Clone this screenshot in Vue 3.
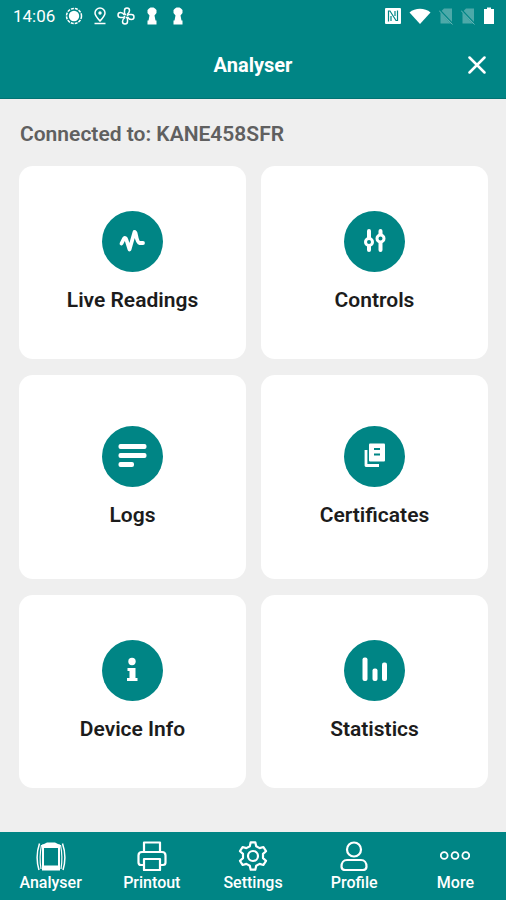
<template>
  <div class="app">
    <header class="top">
      <div class="status-bar">
        <span class="time">14:06</span>
        <div class="status-left">
          <svg width="18" height="18" viewBox="0 0 18 18">
            <circle cx="9" cy="9" r="5.200" fill="#fff" />
            <circle cx="9" cy="9" r="7.500" class="thin" stroke-dasharray="3 1" />
          </svg>
          <svg width="18" height="18" viewBox="0 0 18 18">
            <path d="M9 14 C6 10.800 4 8.700 4 6 A5 5 0 0 1 14 6 C14 8.700 12 10.800 9 14 Z" class="thin" />
            <circle cx="9" cy="6" r="1.700" fill="#fff" />
            <path d="M3.500 16.500 H14.500" class="thin" />
          </svg>
          <svg width="18" height="18" viewBox="0 0 18 18">
            <path v-for="angle in [0, 90, 180, 270]" :key="angle" d="M9 8 L7.500 6.500 V3.500 C7.500 0.200 12.500 0.200 12.500 3.500 C12.500 5.500 11.500 6.500 10 7.500" class="thin" :transform="`rotate(${angle} 9 9)`" />
          </svg>
          <svg v-for="n in 2" :key="n" width="18" height="18" viewBox="0 0 18 18">
            <path d="M6 1.500 L7.500 0.500 H10.500 L12 1.500 L13.500 3 V6 L11.500 8.500 L12.500 13.500 H13.500 V17.500 H4.500 V13.500 H5.500 L6.500 8.500 L4.500 6 V3 Z" fill="#fff" />
          </svg>
        </div>
        <div class="status-right">
          <svg width="16" height="18" viewBox="0 0 16 18">
            <rect y="1" width="16" height="16" rx="1" fill="#fff" />
            <path d="M3.500 14.500 V4 H5 L11 13.500 H12.500 V3.500 M6 14 V9 M10 4 V9" fill="none" stroke="#008585" stroke-width="1.200" />
          </svg>
          <svg width="22" height="18" viewBox="0 0 22 18">
            <path d="M11 17 L0.500 5.500 C6 0.500 16 0.500 21.500 5.500 Z" fill="#fff" />
          </svg>
          <svg v-for="n in 2" :key="n" width="14" height="18" viewBox="0 0 14 18">
            <path d="M5 1.500 H13 V16.500 H1.500 V5 Z" fill="#4da9a9" />
            <path d="M0 2.500 L14 17.500" stroke="#008585" stroke-width="2" />
            <path d="M0 3.500 L13.500 17.500" stroke="#6ab8b8" stroke-width="1" />
          </svg>
          <svg width="12" height="18" viewBox="0 0 12 18">
            <path d="M4 0.500 H8 V2 H11 V17 H1 V2 H4 Z" fill="#fff" />
          </svg>
        </div>
      </div>
      <div class="title-bar">
        <h1>Analyser</h1>
        <button class="close" type="button" aria-label="Close">
          <svg width="18" height="18" viewBox="0 0 18 18">
            <path d="M1.500 1.500 L16.500 16.500 M16.500 1.500 L1.500 16.500" fill="none" stroke="#fff" stroke-width="2.500" stroke-linecap="round" />
          </svg>
        </button>
      </div>
    </header>

    <main>
      <h2>Connected to: {{ device }}</h2>
      <div class="cards">
        <button v-for="card in cards" :key="card.name" class="card" type="button">
          <svg class="card-icon" viewBox="0 0 61 61" aria-hidden="true">
            <circle cx="30.500" cy="30.500" r="30.500" fill="#008585" />
            <path v-if="card.icon === 'live'" d="M19.500 32.500 L22 27.500 Q23.500 26 24.500 29 L27.500 38.500 L32.500 21 Q33.500 21 34 24 Q35.500 32 37.500 32 H41" fill="none" stroke="#fff" stroke-width="3.800" stroke-linecap="round" stroke-linejoin="round" />
            <g v-else-if="card.icon === 'controls'" fill="#008585" stroke="#fff" stroke-width="3" stroke-linecap="round">
              <path d="M25 20 V39 M36.500 20 V39" stroke-width="4" />
              <circle cx="25" cy="31" r="3.500" />
              <circle cx="36.500" cy="27.500" r="3.500" />
            </g>
            <g v-else-if="card.icon === 'logs'" fill="#fff">
              <rect x="16.500" y="18" width="28" height="5" rx="2" />
              <rect x="16.500" y="27" width="28" height="5" rx="2" />
              <rect x="16.500" y="36" width="15.500" height="5" rx="2" />
            </g>
            <g v-else-if="card.icon === 'certificates'" fill="none" stroke="#fff">
              <rect x="25" y="17.500" width="16" height="18" rx="1" fill="#fff" stroke="none" />
              <path d="M30 23 H36 M30 28.500 H36" stroke="#008585" stroke-width="2" />
              <path d="M22 24 V39.500 H35" stroke-width="2.800" stroke-linejoin="round" />
            </g>
            <g v-else-if="card.icon === 'info'" fill="#fff">
              <circle cx="30" cy="21.500" r="3.700" />
              <path d="M25.500 28 H33.500 V38 H35.500 V41 H25 V38 H27.500 V31 H25.500 Z" />
            </g>
            <g v-else fill="#fff">
              <rect x="18.500" y="17.500" width="5" height="23.500" rx="2" />
              <rect x="28.500" y="28.500" width="5" height="12.500" rx="2" />
              <rect x="38" y="22.500" width="5" height="18.500" rx="2" />
            </g>
          </svg>
          <span>{{ card.name }}</span>
        </button>
      </div>
    </main>

    <nav>
      <a v-for="tab in tabs" :key="tab" href="#">
        <svg width="30" height="30" viewBox="0 0 30 30" aria-hidden="true">
          <g v-if="tab === 'Analyser'" fill="none" stroke="#fff">
            <path d="M7 4.500 H23 V28 H7 Z" stroke-width="2" />
            <path d="M11 1.500 H19 L24 4 V7 H6 V4 Z M6 24.500 H24 V29.500 H6 Z" fill="#fff" stroke="none" />
            <path d="M3.500 2.500 Q-1 15.500 3 29 M26.500 2.500 Q31 15.500 27 29" stroke-width="1.500" />
            <path d="M5.500 4 Q3 16 5 28 M24.500 4 Q27 16 25 28" stroke-width="1.200" />
          </g>
          <g v-else-if="tab === 'Printout'" class="line">
            <path d="M7 10 V1.500 H23 V10" />
            <path d="M7 24 H4 Q1.500 24 1.500 21.500 V14.500 Q1.500 11 5 11 H25 Q28.500 11 28.500 14.500 V21.500 Q28.500 24 26 24 H23" />
            <path d="M7 18 H23 V29 H7 Z" />
          </g>
          <g v-else-if="tab === 'Settings'" class="line">
            <path d="M12.700 1.300 H17.300 L18.200 5.200 L21.600 7.100 L25.400 6 L28 10.200 L25 12.900 V17.100 L28 19.800 L25.400 24 L21.600 22.900 L18.200 24.800 L17.300 28.700 H12.700 L11.800 24.800 L8.400 22.900 L4.600 24 L2 19.800 L5 17.100 V12.900 L2 10.200 L4.600 6 L8.400 7.100 L11.800 5.200 Z" />
            <circle cx="15" cy="15" r="5" />
          </g>
          <g v-else-if="tab === 'Profile'" class="line">
            <circle cx="15" cy="8.500" r="7" />
            <path d="M8 19 H22 C25.500 19 27.500 22 27.500 25.500 Q27.500 29 24 29 H6 Q2.500 29 2.500 25.500 C2.500 22 4.500 19 8 19 Z" />
          </g>
          <g v-else fill="none" stroke="#fff" stroke-width="1.800">
            <circle cx="4.200" cy="14.500" r="3.400" />
            <circle cx="15" cy="14.500" r="3.400" />
            <circle cx="25.800" cy="14.500" r="3.400" />
          </g>
        </svg>
        <span>{{ tab }}</span>
      </a>
    </nav>
  </div>
</template>

<script setup>
import { ref } from 'vue'

const device = ref('KANE458SFR')

const cards = [
  { name: 'Live Readings', icon: 'live' },
  { name: 'Controls', icon: 'controls' },
  { name: 'Logs', icon: 'logs' },
  { name: 'Certificates', icon: 'certificates' },
  { name: 'Device Info', icon: 'info' },
  { name: 'Statistics', icon: 'statistics' },
]

const tabs = ['Analyser', 'Printout', 'Settings', 'Profile', 'More']
</script>

<style>
body {
  margin: 0;
  background: #efefef;
}
</style>

<style scoped>
.app {
  display: flex;
  flex-direction: column;
  min-height: 100vh;
  background: #efefef;
  font-family: Roboto, "Liberation Sans", sans-serif;
}

svg {
  display: block;
}

button {
  border: none;
  padding: 0;
  font-family: inherit;
  cursor: pointer;
}

.top {
  background: #008585;
  color: #fff;
  border-bottom: 1px solid #007373;
}

.status-bar {
  display: flex;
  align-items: center;
  height: 31px;
  padding: 0 11px 0 13px;
}

.time {
  font-size: 17px;
  line-height: 24px;
}

.status-left {
  display: flex;
  gap: 8px;
  margin-left: 10px;
}

.status-right {
  display: flex;
  gap: 8px;
  margin-left: auto;
}

.thin {
  fill: none;
  stroke: #fff;
  stroke-width: 1.5;
}

.title-bar {
  display: grid;
  grid-template-columns: 1fr auto 1fr;
  align-items: center;
  height: 67px;
  padding: 0 16px;
}

h1 {
  grid-column: 2;
  margin: 0;
  font-size: 20px;
  line-height: 24px;
  font-weight: 700;
}

.close {
  justify-self: end;
  padding: 4px;
  background: none;
}

main {
  flex: 1;
  display: flex;
  flex-direction: column;
  padding: 23px 18px 44px 19px;
}

h2 {
  margin: 0 0 20px 1px;
  color: #606060;
  font-size: 21px;
  line-height: 24px;
  font-weight: 600;
}

.cards {
  flex: 1;
  display: grid;
  grid-template-columns: 1fr 1fr;
  grid-template-rows: 193fr 204fr 193fr;
  gap: 16px 15px;
}

.card {
  display: flex;
  flex-direction: column;
  align-items: center;
  justify-content: center;
  gap: 16px;
  padding-bottom: 2px;
  background: #fff;
  border-radius: 14px;
  color: #1c1c1c;
  font-size: 21px;
  line-height: 24px;
  font-weight: 600;
}

.card-icon {
  width: 61px;
  height: 61px;
}

nav {
  display: flex;
  height: 68px;
  background: #008585;
}

nav a {
  flex: 1;
  display: flex;
  flex-direction: column;
  align-items: center;
  gap: 2px;
  padding-top: 9px;
  color: #fff;
  font-size: 16px;
  line-height: 20px;
  font-weight: 500;
  text-decoration: none;
}

.line {
  fill: none;
  stroke: #fff;
  stroke-width: 2.2;
  stroke-linejoin: round;
}
</style>
